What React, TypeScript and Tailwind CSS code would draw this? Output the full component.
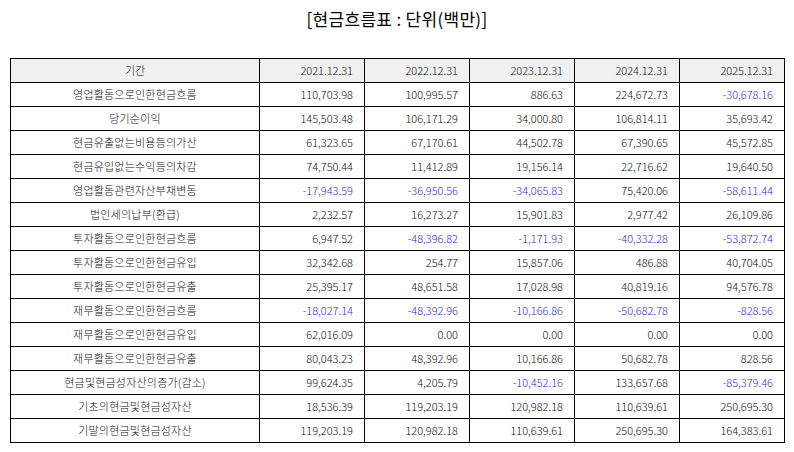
const years = ["2021.12.31", "2022.12.31", "2023.12.31", "2024.12.31", "2025.12.31"];

const rows: [string, string[]][] = [
  ["영업활동으로인한현금흐름", ["110,703.98", "100,995.57", "886.63", "224,672.73", "-30,678.16"]],
  ["당기순이익", ["145,503.48", "106,171.29", "34,000.80", "106,814.11", "35,693.42"]],
  ["현금유출없는비용등의가산", ["61,323.65", "67,170.61", "44,502.78", "67,390.65", "45,572.85"]],
  ["현금유입없는수익등의차감", ["74,750.44", "11,412.89", "19,156.14", "22,716.62", "19,640.50"]],
  ["영업활동관련자산부채변동", ["-17,943.59", "-36,950.56", "-34,065.83", "75,420.06", "-58,611.44"]],
  ["법인세의납부(환급)", ["2,232.57", "16,273.27", "15,901.83", "2,977.42", "26,109.86"]],
  ["투자활동으로인한현금흐름", ["6,947.52", "-48,396.82", "-1,171.93", "-40,332.28", "-53,872.74"]],
  ["투자활동으로인한현금유입", ["32,342.68", "254.77", "15,857.06", "486.88", "40,704.05"]],
  ["투자활동으로인한현금유출", ["25,395.17", "48,651.58", "17,028.98", "40,819.16", "94,576.78"]],
  ["재무활동으로인한현금흐름", ["-18,027.14", "-48,392.96", "-10,166.86", "-50,682.78", "-828.56"]],
  ["재무활동으로인한현금유입", ["62,016.09", "0.00", "0.00", "0.00", "0.00"]],
  ["재무활동으로인한현금유출", ["80,043.23", "48,392.96", "10,166.86", "50,682.78", "828.56"]],
  ["현금및현금성자산의증가(감소)", ["99,624.35", "4,205.79", "-10,452.16", "133,657.68", "-85,379.46"]],
  ["기초의현금및현금성자산", ["18,536.39", "119,203.19", "120,982.18", "110,639.61", "250,695.30"]],
  ["기말의현금및현금성자산", ["119,203.19", "120,982.18", "110,639.61", "250,695.30", "164,383.61"]],
];

export default function App() {
  return (
    <div className="w-[794px] h-[452px] bg-white font-['Noto_Sans_CJK_KR','Noto_Sans',sans-serif] font-light text-[#111]">
      <h1 className="pt-[7px] text-center text-[17px] leading-[24px] font-normal text-black tracking-[0.3px]">
        [현금흐름표 : 단위(백만)]
      </h1>

      <div className="px-[10px] pt-[27px]">
        <table className="w-[774px] table-fixed border-collapse text-[11px]">
          <colgroup>
            <col className="w-[249px]" />
            {years.map((y) => (
              <col key={y} className="w-[105px]" />
            ))}
          </colgroup>
          <thead>
            <tr className="h-[24px] bg-[#f0f0f0]">
              <th className="border border-black font-light text-center">기간</th>
              {years.map((y) => (
                <th key={y} className="border border-black font-light text-right pr-[11px]">
                  {y}
                </th>
              ))}
            </tr>
          </thead>
          <tbody>
            {rows.map(([label, values]) => (
              <tr key={label} className="h-[24px]">
                <td className="border border-black text-center tracking-[0.2px]">{label}</td>
                {values.map((v, i) => (
                  <td
                    key={i}
                    className={
                      v.startsWith("-")
                        ? "border border-black text-right pr-[11px] text-[#3030d0]"
                        : "border border-black text-right pr-[11px]"
                    }
                  >
                    {v}
                  </td>
                ))}
              </tr>
            ))}
          </tbody>
        </table>
      </div>
    </div>
  );
}
